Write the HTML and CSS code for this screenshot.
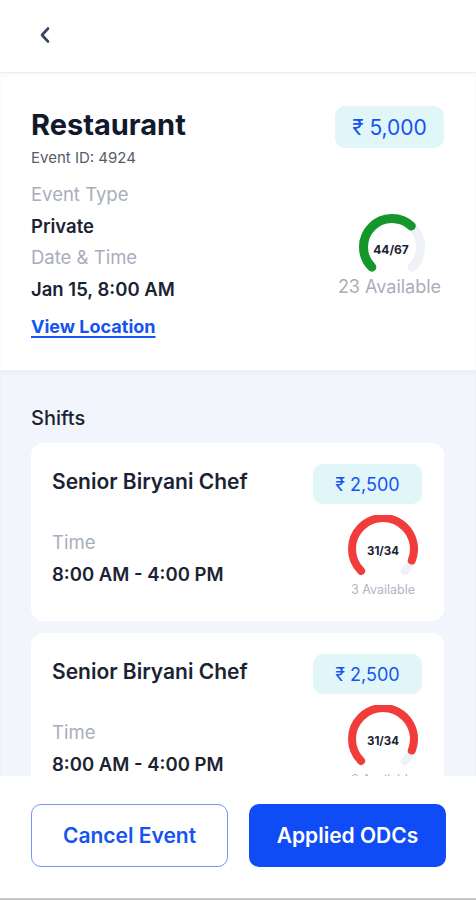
FILE: index.html
```html
<!DOCTYPE html>
<html lang="en">
<head>
    <meta charset="UTF-8">
    <meta name="viewport" content="width=device-width, initial-scale=1.0">
    <title>Event Details</title>
    <link rel="stylesheet" href="styles.css">
</head>
<body>
    <header class="topbar">
        <button class="back-btn" aria-label="Back">
            <svg width="14" height="18" viewBox="0 0 14 18">
                <path d="M10 2.5 L4 9 L10 15.5" fill="none" stroke="#36445c" stroke-width="2.6" stroke-linecap="round" stroke-linejoin="round"/>
            </svg>
        </button>
    </header>

    <section class="info">
        <div class="info-left">
            <h1 class="title">Restaurant</h1>
            <div class="event-id">Event ID: 4924</div>

            <div class="details">
                <div class="label">Event Type</div>
                <div class="value">Private</div>
                <div class="label">Date &amp; Time</div>
                <div class="value">Jan 15, 8:00 AM</div>
            </div>
            <a href="#" class="link">View Location</a>
        </div>

        <div class="info-right">
            <div class="price price-lg">₹ 5,000</div>
            <svg class="gauge-lg" width="68" height="64" viewBox="0 0 68 64">
                <circle cx="34" cy="33" r="28.5" fill="none" stroke="#eef1f6" stroke-width="9" stroke-linecap="round"
                        stroke-dasharray="134.3 179.1" transform="rotate(135 34 33)"/>
                <circle cx="34" cy="33" r="28.5" fill="none" stroke="#14962a" stroke-width="9" stroke-linecap="round"
                        stroke-dasharray="88.2 179.1" transform="rotate(135 34 33)"/>
                <text x="33" y="40" class="gauge-text">44/67</text>
            </svg>
            <div class="available">23 Available</div>
        </div>
    </section>

    <section class="shifts">
        <h2 class="shifts-title">Shifts</h2>

        <div class="shift-card">
            <div class="shift-left">
                <div class="shift-name">Senior Biryani Chef</div>
                <div class="label time-label">Time</div>
                <div class="value">8:00 AM - 4:00 PM</div>
            </div>
            <div class="shift-right">
                <div class="price">₹ 2,500</div>
                <div class="gauge-box">
                    <svg width="70" height="62" viewBox="0 0 70 62">
                        <circle cx="35" cy="34" r="31" fill="none" stroke="#eef1f6" stroke-width="8" stroke-linecap="round"
                                stroke-dasharray="146.1 194.8" transform="rotate(135 35 34)"/>
                        <circle cx="35" cy="34" r="31" fill="none" stroke="#f23b3b" stroke-width="8" stroke-linecap="round"
                                stroke-dasharray="133.2 194.8" transform="rotate(135 35 34)"/>
                        <text x="35" y="40" class="gauge-text small">31/34</text>
                    </svg>
                    <div class="available-sm">3 Available</div>
                </div>
            </div>
        </div>

        <div class="shift-card">
            <div class="shift-left">
                <div class="shift-name">Senior Biryani Chef</div>
                <div class="label time-label">Time</div>
                <div class="value">8:00 AM - 4:00 PM</div>
            </div>
            <div class="shift-right">
                <div class="price">₹ 2,500</div>
                <div class="gauge-box">
                    <svg width="70" height="62" viewBox="0 0 70 62">
                        <circle cx="35" cy="34" r="31" fill="none" stroke="#eef1f6" stroke-width="8" stroke-linecap="round"
                                stroke-dasharray="146.1 194.8" transform="rotate(135 35 34)"/>
                        <circle cx="35" cy="34" r="31" fill="none" stroke="#f23b3b" stroke-width="8" stroke-linecap="round"
                                stroke-dasharray="133.2 194.8" transform="rotate(135 35 34)"/>
                        <text x="35" y="40" class="gauge-text small">31/34</text>
                    </svg>
                    <div class="available-sm">3 Available</div>
                </div>
            </div>
        </div>
    </section>

    <footer class="actions">
        <button class="btn btn-outline">Cancel Event</button>
        <button class="btn btn-primary">Applied ODCs</button>
    </footer>
</body>
</html>
```

FILE: styles.css
```css
* {
    box-sizing: border-box;
}

body {
    margin: 0;
    background-color: #f2f5fb;
    color: #1b2333;
    font-family: 'Inter', 'Roboto', sans-serif;
}

.topbar {
    height: 73px;
    background-color: #fff;
    display: flex;
    align-items: center;
    padding-left: 33px;
    border-bottom: 1px solid #eeeeee;
}

.back-btn {
    background: none;
    border: none;
    padding: 0;
    width: 24px;
    height: 24px;
    display: flex;
    align-items: center;
    justify-content: center;
    margin-top: -3px;
    cursor: pointer;
}

/* event info */
.info {
    background-color: #fff;
    display: flex;
    justify-content: space-between;
    padding: 35px 32px 28px 31px;
    box-shadow: inset 0 2px 3px rgba(0, 0, 0, 0.035);
}

.title {
    margin: 0;
    font-size: 29px;
    line-height: 34px;
    font-weight: 700;
    color: #101a2c;
}

.event-id {
    margin-top: 7px;
    font-size: 15px;
    line-height: 18px;
    color: #555d6b;
}

.details {
    margin-top: 12px;
}

.label {
    font-size: 18.5px;
    line-height: 31.5px;
    color: #a8aebb;
}

.value {
    font-size: 18.5px;
    line-height: 31.5px;
    font-weight: 600;
    color: #1b2333;
}

.link {
    display: inline-block;
    margin-top: 6px;
    font-size: 18px;
    line-height: 31px;
    font-weight: 700;
    color: #1654f0;
    text-decoration: underline;
    text-underline-offset: 3px;
    text-decoration-thickness: 1.5px;
}

.info-right {
    width: 109px;
    display: flex;
    flex-direction: column;
    align-items: center;
}

.price {
    width: 109px;
    height: 40px;
    border-radius: 10px;
    background-color: #e1f6f8;
    color: #1654f0;
    font-size: 18px;
    display: flex;
    align-items: center;
    justify-content: center;
}

.price-lg {
    height: 42px;
    font-size: 21px;
    margin-top: -2px;
}

.gauge-lg {
    margin-top: 66px;
    margin-left: 4px;
}

.gauge-text {
    font-family: 'Inter', sans-serif;
    font-size: 12px;
    font-weight: 700;
    fill: #1b2333;
    text-anchor: middle;
}

.gauge-text.small {
    font-size: 11.5px;
}

.available {
    margin-top: -3px;
    font-size: 18px;
    line-height: 24px;
    color: #a8aebb;
    white-space: nowrap;
}

/* shifts list */
.shifts {
    padding: 36px 32px 140px 31px;
    box-shadow: inset 0 3px 4px rgba(0, 0, 0, 0.03);
}

.shifts-title {
    margin: 0 0 12px;
    font-size: 20px;
    line-height: 25px;
    font-weight: 500;
    color: #1b2333;
}

.shift-card {
    background-color: #fff;
    border-radius: 12px;
    display: flex;
    justify-content: space-between;
    padding: 21px 22px 23px 21px;
    margin-bottom: 12px;
}

.shift-name {
    height: 40px;
    padding-bottom: 6px;
    display: flex;
    align-items: center;
    font-size: 21px;
    font-weight: 600;
    color: #1b2333;
}

.time-label {
    margin-top: 23px;
}

.shift-right {
    display: flex;
    flex-direction: column;
    align-items: flex-end;
}

.gauge-box {
    margin-top: 11px;
    margin-right: 4px;
    display: flex;
    flex-direction: column;
    align-items: center;
}

.available-sm {
    margin-top: 5px;
    font-size: 12.5px;
    line-height: 16px;
    color: #b0b6c2;
    white-space: nowrap;
}

/* bottom buttons */
.actions {
    position: fixed;
    left: 0;
    right: 0;
    bottom: 0;
    height: 124px;
    background-color: #fff;
    display: flex;
    gap: 21px;
    padding: 28px 30px 0 31px;
    border-bottom: 2px solid #c6c6c6;
}

.btn {
    width: 197px;
    height: 63px;
    border-radius: 10px;
    font-family: 'Inter', sans-serif;
    font-size: 21px;
    font-weight: 600;
    cursor: pointer;
}

.btn-outline {
    background-color: #fff;
    color: #1654f0;
    border: 1.5px solid #7097f4;
}

.btn-primary {
    background-color: #0f4cf5;
    color: #fff;
    border: none;
}
```
